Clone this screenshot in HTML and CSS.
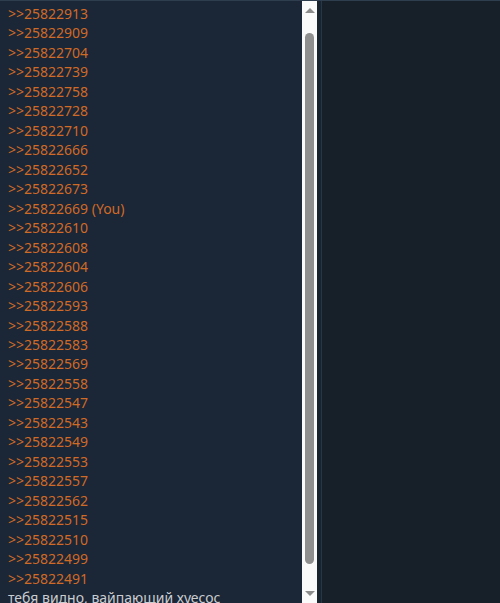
FILE: index.html
```html
<!DOCTYPE html>
<html lang="ru">
<head>
    <meta charset="UTF-8">
    <meta name="viewport" content="width=device-width, initial-scale=1.0">
    <title>Replies</title>
    <link rel="stylesheet" href="styles.css">
</head>
<body>

<div class="frame">
    <div class="thread">
        <a class="reply" href="#25822913">&gt;&gt;25822913</a>
        <a class="reply" href="#25822909">&gt;&gt;25822909</a>
        <a class="reply" href="#25822704">&gt;&gt;25822704</a>
        <a class="reply" href="#25822739">&gt;&gt;25822739</a>
        <a class="reply" href="#25822758">&gt;&gt;25822758</a>
        <a class="reply" href="#25822728">&gt;&gt;25822728</a>
        <a class="reply" href="#25822710">&gt;&gt;25822710</a>
        <a class="reply" href="#25822666">&gt;&gt;25822666</a>
        <a class="reply" href="#25822652">&gt;&gt;25822652</a>
        <a class="reply" href="#25822673">&gt;&gt;25822673</a>
        <a class="reply" href="#25822669">&gt;&gt;25822669 (You)</a>
        <a class="reply" href="#25822610">&gt;&gt;25822610</a>
        <a class="reply" href="#25822608">&gt;&gt;25822608</a>
        <a class="reply" href="#25822604">&gt;&gt;25822604</a>
        <a class="reply" href="#25822606">&gt;&gt;25822606</a>
        <a class="reply" href="#25822593">&gt;&gt;25822593</a>
        <a class="reply" href="#25822588">&gt;&gt;25822588</a>
        <a class="reply" href="#25822583">&gt;&gt;25822583</a>
        <a class="reply" href="#25822569">&gt;&gt;25822569</a>
        <a class="reply" href="#25822558">&gt;&gt;25822558</a>
        <a class="reply" href="#25822547">&gt;&gt;25822547</a>
        <a class="reply" href="#25822543">&gt;&gt;25822543</a>
        <a class="reply" href="#25822549">&gt;&gt;25822549</a>
        <a class="reply" href="#25822553">&gt;&gt;25822553</a>
        <a class="reply" href="#25822557">&gt;&gt;25822557</a>
        <a class="reply" href="#25822562">&gt;&gt;25822562</a>
        <a class="reply" href="#25822515">&gt;&gt;25822515</a>
        <a class="reply" href="#25822510">&gt;&gt;25822510</a>
        <a class="reply" href="#25822499">&gt;&gt;25822499</a>
        <a class="reply" href="#25822491">&gt;&gt;25822491</a>
        <p class="message">тебя видно, вайпающий хуесос</p>
    </div>

    <div class="scrollbar">
        <div class="arrow arrow-up"></div>
        <div class="track">
            <div class="thumb"></div>
        </div>
        <div class="arrow arrow-down"></div>
    </div>

    <div class="divider"></div>

    <div class="side"></div>
</div>

</body>
</html>
```

FILE: styles.css
```css
body {
    margin: 0;
    background-color: #172029;
    font-family: "Noto Sans", "Open Sans", sans-serif;
    font-size: 14px;
}

.frame {
    display: flex;
    height: 602px;
    border-top: 1px solid #2f3e4e;
    overflow: hidden;
}

.thread {
    width: 286px;
    padding: 3px 8px 0 8px;
    background-color: #1b2636;
    overflow: hidden;
    line-height: 19.47px;
}

.reply {
    display: block;
    color: #cf6a27;
    text-decoration: none;
    white-space: nowrap;
}

.message {
    margin: 0;
    color: #c9cdd1;
    white-space: nowrap;
}

.scrollbar {
    width: 15px;
    background-color: #fafafa;
    display: flex;
    flex-direction: column;
    align-items: center;
}

.arrow {
    width: 0;
    height: 0;
    border-left: 5px solid transparent;
    border-right: 5px solid transparent;
}

.arrow-up {
    margin-top: 7px;
    border-bottom: 5px solid #8c8c8c;
}

.arrow-down {
    margin-bottom: 7px;
    border-top: 5px solid #8c8c8c;
}

.track {
    flex: 1;
    width: 100%;
    display: flex;
    justify-content: center;
    padding-top: 20px;
    padding-bottom: 24px;
}

.thumb {
    width: 9px;
    height: 531px;
    background-color: #8f8f8f;
    border-radius: 5px;
}

.divider {
    width: 4px;
    background-color: #19242f;
    border-right: 1px solid #24364a;
}

.side {
    flex: 1;
    background-color: #172029;
}
```
